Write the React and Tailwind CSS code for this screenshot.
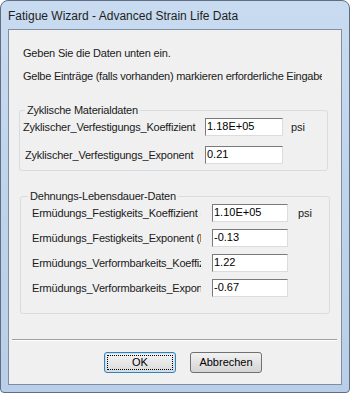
function Field({ label, value, unit, labelClass, inputClass, unitClass }) {
  return (
    <div className="flex items-center h-[18px]">
      <div className={"overflow-hidden whitespace-nowrap text-[#1a1a1a] tracking-[-0.2px] " + labelClass}>{label}</div>
      <div
        className={
          "h-[18px] bg-white border border-t-[#7a7a7a] border-l-[#7a7a7a] border-r-[#dcdcdc] border-b-[#dcdcdc] pl-[1px] leading-[14px] text-black " +
          inputClass
        }
      >
        {value}
      </div>
      {unit && <span className={"text-[#1a1a1a] " + unitClass}>{unit}</span>}
    </div>
  )
}

export default function App() {
  return (
    <div
      className="w-[350px] h-[393px] rounded-t-[8px] rounded-b-[4px] border border-[#5f6e80] bg-gradient-to-b from-[#c8dbf0] via-[#bfd3eb] to-[#b9cee8] flex flex-col px-[7px] pb-[7px] text-[11px] leading-[13px]"
      style={{ fontFamily: '"Liberation Sans", Arial, sans-serif' }}
    >
      {/* Title bar */}
      <div className="h-[28px] flex items-center text-[12px] text-[#1e1e1e] pt-[2px]">
        Fatigue Wizard - Advanced Strain Life Data
      </div>

      {/* Client area */}
      <div className="flex-1 border border-[#7f8fa3] bg-[#f0f0f0] flex flex-col">
        <p className="pl-[14px] pt-[17px] text-[#1a1a1a] tracking-[-0.2px]">Geben Sie die Daten unten ein.</p>
        <p className="pl-[14px] mt-[10px] w-[313px] overflow-hidden whitespace-nowrap text-[#1a1a1a] tracking-[-0.25px]">
          Gelbe Einträge (falls vorhanden) markieren erforderliche Eingaben
        </p>

        {/* Zyklische Materialdaten */}
        <fieldset className="ml-[10px] mt-[21px] w-[309px] h-[67px] border border-[#d5dde3] rounded-[3px]">
          <legend className="ml-[5px] px-[2px] text-[#1a1a1a] tracking-[-0.2px]">Zyklische Materialdaten</legend>
          <div className="flex flex-col gap-[10px] pt-[1px]">
            <Field
              label="Zyklischer_Verfestigungs_Koeffizient"
              value="1.18E+05"
              unit="psi"
              labelClass="pl-[3px] w-[185px]"
              inputClass="w-[78px]"
              unitClass="ml-[8px]"
            />
            <Field
              label="Zyklischer_Verfestigungs_Exponent"
              value="0.21"
              labelClass="pl-[5px] w-[185px]"
              inputClass="w-[78px]"
            />
          </div>
        </fieldset>

        {/* Dehnungs-Lebensdauer-Daten */}
        <fieldset className="ml-[11px] mt-[19px] w-[310px] h-[124px] border border-[#d5dde3] rounded-[3px]">
          <legend className="ml-[7px] px-[2px] text-[#1a1a1a] tracking-[-0.2px]">Dehnungs-Lebensdauer-Daten</legend>
          <div className="flex flex-col gap-[7px] pt-[1px]">
            <Field
              label="Ermüdungs_Festigkeits_Koeffizient (sf')"
              value="1.10E+05"
              unit="psi"
              labelClass="ml-[11px] w-[169px] mr-[11px]"
              inputClass="w-[76px]"
              unitClass="ml-[10px]"
            />
            <Field
              label="Ermüdungs_Festigkeits_Exponent (b)"
              value="-0.13"
              labelClass="ml-[11px] w-[169px] mr-[11px]"
              inputClass="w-[76px]"
            />
            <Field
              label="Ermüdungs_Verformbarkeits_Koeffizient (ef')"
              value="1.22"
              labelClass="ml-[11px] w-[169px] mr-[11px]"
              inputClass="w-[76px]"
            />
            <Field
              label="Ermüdungs_Verformbarkeits_Exponent (c)"
              value="-0.67"
              labelClass="ml-[11px] w-[169px] mr-[11px]"
              inputClass="w-[76px]"
            />
          </div>
        </fieldset>

        {/* Separator */}
        <div className="ml-[3px] mt-[25px] w-[325px] border-t border-t-[#a0a0a0] border-b border-b-white" />

        {/* Buttons */}
        <div className="flex gap-[14px] ml-[95px] mt-[11px]">
          <button className="w-[72px] h-[21px] rounded-[3px] border border-[#3c7fb1] bg-gradient-to-b from-[#f4f4f4] to-[#dadada] p-[2px] shadow-[inset_0_0_0_1px_#bfe4f7]">
            <div className="w-full h-full border border-dotted border-black flex items-center justify-center text-black leading-none">
              OK
            </div>
          </button>
          <button className="w-[72px] h-[21px] rounded-[3px] border border-[#707070] bg-gradient-to-b from-[#f2f2f2] to-[#d4d4d4] flex items-center justify-center text-black leading-none">
            Abbrechen
          </button>
        </div>
      </div>
    </div>
  )
}
